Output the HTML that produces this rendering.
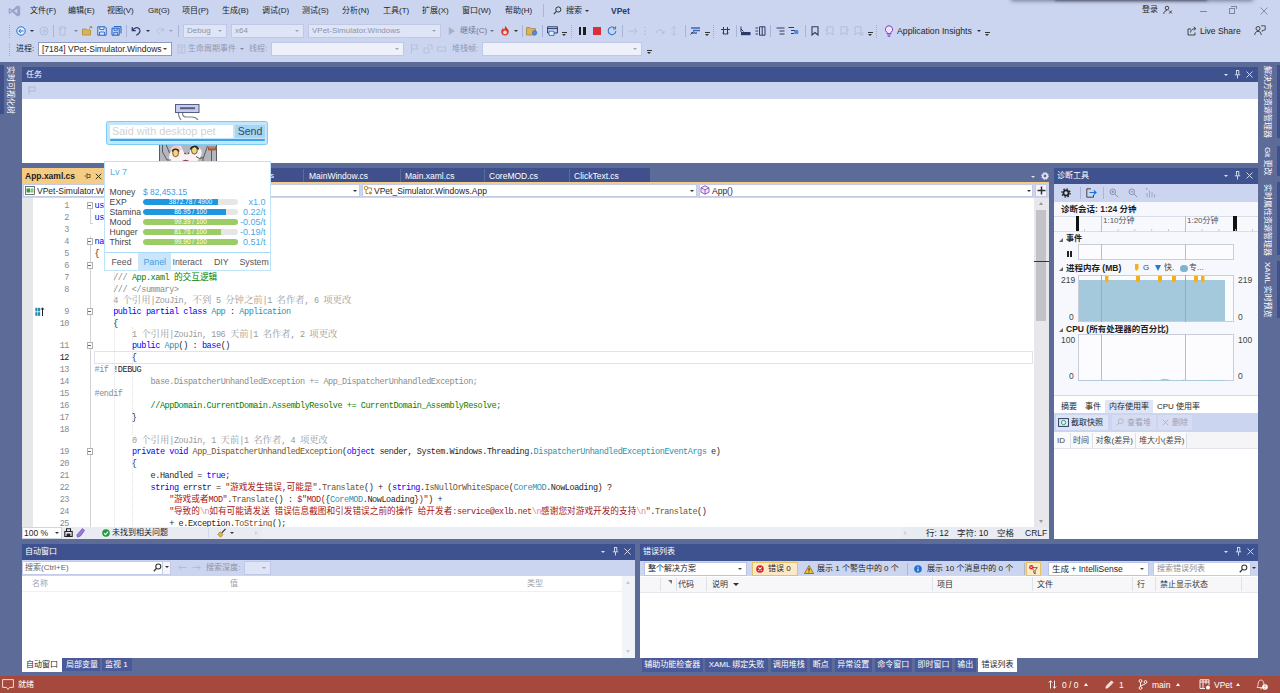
<!DOCTYPE html>
<html lang="zh-CN">
<head>
<meta charset="utf-8">
<title>VPet - Microsoft Visual Studio</title>
<style>
*{box-sizing:border-box;margin:0;padding:0}
html,body{width:1280px;height:693px;overflow:hidden}
body{position:relative;background:#5d6b99;font-family:"Liberation Sans","Noto Sans CJK SC",sans-serif;font-size:8px;color:#1e1e1e;line-height:1}
.a{position:absolute}
.t{position:absolute;white-space:nowrap;line-height:10px;height:10px}
.w{color:#fff}
.g{color:#8d93a8}
.mono{font-family:"Liberation Mono","Noto Sans CJK SC",monospace}
/* top chrome */
#chrome{left:0;top:0;width:1280px;height:62px;background:#ccd5f0}
.combo{position:absolute;background:#fff;border:1px solid #b9c3e2;height:14px}
.combo.dis{background:#dfe5f6;border-color:#bfc8e4}
.combo:after{content:"";position:absolute;right:4px;top:5px;border:2px solid transparent;border-top:2.5px solid #444;}
.combo.dis:after{border-top-color:#9aa3bd}
.combo .t{left:3px;top:1px}
.sep{position:absolute;width:1px;background:#aab4d6;height:12px}
.grip{position:absolute;width:0;height:13px;border-left:1.5px dotted #a3acd0}
.dd{position:absolute;width:0;height:0;border:2px solid transparent;border-top:2.5px solid #333}
.dd.w{border-top-color:#dfe4f5}
/* tool windows */
.ttl{position:absolute;background:#3f5290;color:#fff}
.tb{position:absolute;background:#ccd5f0}
.white{position:absolute;background:#fff}

/* editor */
.cl{position:absolute;left:72.5px;height:12px;line-height:12px;white-space:pre;font-family:"Liberation Mono","Noto Sans CJK SC",monospace;font-size:8.5px;letter-spacing:-0.43px;color:#1e1e1e}
.cl .c{font-size:8.67px;letter-spacing:0}
.cl.lens{color:#9a9a9a;height:10px;line-height:10px}
.cl.lens .lc{font-family:"Noto Serif CJK SC","Noto Sans CJK SC",serif;font-size:9.33px;letter-spacing:0}
.ln{position:absolute;left:19px;width:28px;text-align:right;height:12px;line-height:12px;font-family:"Liberation Mono",monospace;font-size:8.5px;letter-spacing:-0.43px;color:#858c96}
.ln.cur{color:#1e1e1e}
.k{color:#0000ff}.ty{color:#2b91af}.s{color:#a31515}.cm{color:#008000}.gr{color:#8c8c8c}.es{color:#e08a8a}.fn{color:#74531f}
.ob{position:absolute;width:6.5px;height:6.5px;border:1px solid #b0b0b0;background:#fff}
.ob:after{content:"";position:absolute;left:0.8px;top:1.8px;width:3px;height:1px;background:#666}

.tri{position:absolute;width:0;height:0;border-left:4px solid transparent;border-bottom:4px solid #666}
.mk{position:absolute;width:4px;height:7px;background:#f2b01e;clip-path:polygon(0 0,100% 0,100% 65%,50% 100%,0 65%)}

.pl{font-size:8.6px;color:#444}
.pv{font-size:9px;color:#4aa8e6}
.pm{font-size:8.8px;color:#555}
.rot{transform-origin:0 0;transform:rotate(90deg)}
</style>
</head>
<body>

<!-- ================= TOP CHROME ================= -->
<div id="chrome" class="a">
  <!-- VS logo -->
  <svg class="a" style="left:8px;top:5px" width="13" height="12" viewBox="0 0 13 12"><path d="M9.3 0.6 L12.2 1.8 V10.2 L9.3 11.4 L4.2 6.9 L1.7 8.9 L0.6 8.3 V3.7 L1.7 3.1 L4.2 5.1 Z M9.2 3.6 L6.2 6 L9.2 8.4 Z M1.8 4.7 V7.3 L3.2 6 Z" fill="#9aa3c9" fill-rule="evenodd"/></svg>
  <span class="t" style="left:30px;top:6px">文件(F)</span>
  <span class="t" style="left:68px;top:6px">编辑(E)</span>
  <span class="t" style="left:107px;top:6px">视图(V)</span>
  <span class="t" style="left:148px;top:6px">Git(G)</span>
  <span class="t" style="left:182px;top:6px">项目(P)</span>
  <span class="t" style="left:222px;top:6px">生成(B)</span>
  <span class="t" style="left:262px;top:6px">调试(D)</span>
  <span class="t" style="left:302px;top:6px">测试(S)</span>
  <span class="t" style="left:342px;top:6px">分析(N)</span>
  <span class="t" style="left:383px;top:6px">工具(T)</span>
  <span class="t" style="left:422px;top:6px">扩展(X)</span>
  <span class="t" style="left:462px;top:6px">窗口(W)</span>
  <span class="t" style="left:505px;top:6px">帮助(H)</span>
  <div class="sep" style="left:543px;top:4px;height:13px"></div>
  <svg class="a" style="left:553px;top:6px" width="9" height="9" viewBox="0 0 9 9"><circle cx="5.3" cy="3.5" r="2.6" fill="none" stroke="#333" stroke-width="1"/><path d="M3.4 5.4 L0.8 8.2" stroke="#333" stroke-width="1.1"/></svg>
  <span class="t" style="left:566px;top:6px">搜索</span>
  <div class="dd" style="left:585px;top:10px"></div>
  <span class="t" style="left:611px;top:6px;font-weight:bold;color:#2c3a6b;font-size:8.5px">VPet</span>

  <!-- window controls -->
  <span class="t" style="left:1142px;top:5px">登录</span>
  <svg class="a" style="left:1163px;top:5px" width="10" height="10" viewBox="0 0 10 10"><circle cx="4" cy="3" r="1.8" fill="none" stroke="#333" stroke-width="0.9"/><path d="M0.8 9 C0.8 6.4 2.4 5.6 4 5.6 M6 5.5 L9 8.5 M6.2 8.6 L8.8 5.6" fill="none" stroke="#333" stroke-width="0.9"/></svg>
  <div class="a" style="left:1200px;top:11px;width:7px;height:1px;background:#7d859f"></div>
  <div class="a" style="left:1229px;top:8px;width:6px;height:6px;border:1px solid #7d859f"></div>
  <div class="a" style="left:1231px;top:6px;width:6px;height:3px;border:1px solid #7d859f;border-bottom:0;border-left:0"></div>
  <svg class="a" style="left:1260px;top:7px" width="8" height="8" viewBox="0 0 8 8"><path d="M0.5 0.5 L7.5 7.5 M7.5 0.5 L0.5 7.5" stroke="#7d859f" stroke-width="0.9"/></svg>

  <div class="a" style="left:1012px;top:-8px;width:240px;height:8px;box-shadow:0 0 4px 1px rgba(40,45,70,.55)"></div><div class="a" style="left:1056px;top:-8px;width:150px;height:8px;box-shadow:0 0 3px 1px rgba(20,25,40,.5)"></div>
  <!-- toolbar row 1 -->
  <div class="grip" style="left:9px;top:25px"></div>
  <svg class="a" style="left:16px;top:26px" width="10" height="10" viewBox="0 0 10 10"><circle cx="5" cy="5" r="4.2" fill="#e8f0ff" stroke="#1f6fd0" stroke-width="1"/><path d="M7.5 5 H3 M4.8 3 L2.8 5 L4.8 7" fill="none" stroke="#1f6fd0" stroke-width="1"/></svg>
  <div class="dd" style="left:30px;top:30px"></div>
  <svg class="a" style="left:39px;top:26px" width="10" height="10" viewBox="0 0 10 10"><circle cx="5" cy="5" r="4" fill="none" stroke="#b3bcd9" stroke-width="1"/><path d="M2.5 5 H7 M5.2 3 L7.2 5 L5.2 7" fill="none" stroke="#b3bcd9" stroke-width="1"/></svg>
  <div class="sep" style="left:53px;top:25px"></div>
  <svg class="a" style="left:58px;top:26px" width="10" height="10" viewBox="0 0 10 10"><path d="M2 1 H7 V9 H2 Z M6 0.5 L8.5 3 M0.5 3 H4" fill="none" stroke="#b3bcd9" stroke-width="1"/></svg>
  <div class="dd" style="left:74px;top:30px;border-top-color:#7b84a3"></div>
  <svg class="a" style="left:82px;top:26px" width="11" height="10" viewBox="0 0 11 10"><path d="M0.5 9 V3 H4 L5 4 H8.5 V9 Z" fill="#dcb35a" stroke="#b08a2e" stroke-width="0.8"/><path d="M7 2.5 L9.8 0.6 M9.8 0.6 H7.8 M9.8 0.6 V2.4" stroke="#b08a2e" stroke-width="0.9" fill="none"/></svg>
  <svg class="a" style="left:97px;top:26px" width="10" height="10" viewBox="0 0 10 10"><path d="M0.8 0.8 H8 L9.2 2 V9.2 H0.8 Z" fill="#e6efff" stroke="#1f5fbf" stroke-width="1"/><path d="M2.8 1 V3.6 H7 V1 M2.6 9 V6 H7.4 V9" fill="none" stroke="#1f5fbf" stroke-width="0.9"/></svg>
  <svg class="a" style="left:111px;top:26px" width="11" height="10" viewBox="0 0 11 10"><path d="M1 2.2 H8.2 V9.2 H1 Z M2.8 0.6 H10 V7.4" fill="none" stroke="#1f5fbf" stroke-width="1"/><path d="M3 2.4 V4.4 H6.3 V2.4 M2.8 9 V6.4 H6.6 V9" fill="none" stroke="#1f5fbf" stroke-width="0.8"/></svg>
  <div class="sep" style="left:126px;top:25px"></div>
  <svg class="a" style="left:131px;top:26px" width="11" height="10" viewBox="0 0 11 10"><path d="M1.2 1 V4.6 H4.8 M1.6 4.4 C3 1.6 6.6 0.8 8.4 3 C10 5.2 8.4 7.8 5.2 9.2" fill="none" stroke="#2b3a67" stroke-width="1.2"/></svg>
  <div class="dd" style="left:146px;top:30px"></div>
  <svg class="a" style="left:155px;top:27px" width="10" height="8" viewBox="0 0 11 10"><path d="M9.8 1 V4.6 H6.2 M9.4 4.4 C8 1.6 4.4 0.8 2.6 3 C1 5.2 2.6 7.8 5.8 9.2" fill="none" stroke="#b3bcd9" stroke-width="1.1"/></svg>
  <div class="dd" style="left:169px;top:30px;border-top-color:#9aa3bd"></div>
  <div class="sep" style="left:178px;top:25px"></div>
  <div class="combo dis" style="left:183px;top:24px;width:44px"><span class="t g">Debug</span></div>
  <div class="combo dis" style="left:231px;top:24px;width:73px"><span class="t g">x64</span></div>
  <div class="combo dis" style="left:308px;top:24px;width:133px"><span class="t g">VPet-Simulator.Windows</span></div>
  <svg class="a" style="left:448px;top:26px" width="8" height="10" viewBox="0 0 8 10"><path d="M0.8 1 L7 5 L0.8 9 Z" fill="#a8b0c9"/></svg>
  <span class="t" style="left:460px;top:26px;color:#6b7390">继续(C)</span>
  <div class="dd" style="left:490px;top:30px;border-top-color:#6b7390"></div>
  <svg class="a" style="left:499.5px;top:25px" width="10" height="11" viewBox="0 0 10 11"><path d="M5 0.5 C5.6 2.4 8.8 3.6 8.8 6.8 C8.8 9.2 7 10.6 5 10.6 C3 10.6 1.2 9.2 1.2 6.8 C1.2 5 2.4 4.2 2.8 3 C3.6 3.8 3.8 4.4 3.8 5 C4.8 3.8 5.2 2.2 5 0.5 Z" fill="#d8352a"/><circle cx="5" cy="7.4" r="1.9" fill="#f7d9d4"/></svg>
  <div class="dd" style="left:513.5px;top:30px"></div>
  <div class="sep" style="left:521.5px;top:25px"></div>
  <svg class="a" style="left:526px;top:26px" width="12" height="10" viewBox="0 0 12 10"><path d="M0.5 9 V1.5 H4 L5 2.6 H9.5 V9 Z" fill="#dcb35a" stroke="#a98733" stroke-width="0.8"/><circle cx="8.6" cy="6.8" r="2.2" fill="#4e8de0" stroke="#2a63b5" stroke-width="0.6"/></svg>
  <div class="sep" style="left:542px;top:25px"></div>
  <svg class="a" style="left:546.5px;top:26px" width="11" height="10" viewBox="0 0 11 10"><path d="M0.6 0.8 H10.4 V7 H0.6 Z M0.6 2.6 H10.4" fill="none" stroke="#2b3a67" stroke-width="1"/><path d="M2 9.4 H7 V5.2 H2 Z" fill="#e8f0ff" stroke="#1f6fd0" stroke-width="0.9"/></svg>
  <div class="a" style="left:561.5px;top:32px;width:5px;height:1px;background:#333"></div><div class="dd" style="left:561.5px;top:34px;border-width:2px 2.5px 0 2.5px"></div>
  <div class="grip" style="left:570.5px;top:25px"></div>
  <div class="a" style="left:578.5px;top:27px;width:2.7px;height:8px;background:#1e1e1e"></div><div class="a" style="left:583.3px;top:27px;width:2.7px;height:8px;background:#1e1e1e"></div>
  <div class="a" style="left:593px;top:27px;width:7.5px;height:7.5px;background:#d7303a"></div>
  <svg class="a" style="left:606.5px;top:26px" width="10" height="10" viewBox="0 0 10 10"><path d="M7.6 2 A3.8 3.8 0 1 0 8.8 5" fill="none" stroke="#2f74cf" stroke-width="1.1"/><path d="M8.6 0.4 V3 H6" fill="none" stroke="#2f74cf" stroke-width="1"/></svg>
  <div class="sep" style="left:621.5px;top:25px"></div>
  <svg class="a" style="left:627.5px;top:27px" width="10" height="8" viewBox="0 0 10 8"><path d="M0.5 4 H9 M6 1 L9 4 L6 7" fill="none" stroke="#b3bcd9" stroke-width="1"/></svg>
  <svg class="a" style="left:643px;top:26px" width="4" height="10" viewBox="0 0 4 10"><circle cx="2" cy="1.5" r="0.8" fill="#b3bcd9"/><circle cx="2" cy="5" r="0.8" fill="#b3bcd9"/><circle cx="2" cy="8.500" r="0.8" fill="#b3bcd9"/></svg>
  <svg class="a" style="left:655px;top:27px" width="10" height="8" viewBox="0 0 10 8"><path d="M1 6.500 C1 2 8 1.500 8.500 6 M6.500 5 L8.600 6.600 L9.800 4.200" fill="none" stroke="#b3bcd9" stroke-width="1"/></svg>
  <svg class="a" style="left:671px;top:26px" width="6" height="10" viewBox="0 0 6 10"><path d="M3 0.500 V9.500 M1 2.500 L3 0.500 L5 2.500 M1 7.500 L3 9.500 L5 7.500" fill="none" stroke="#b3bcd9" stroke-width="0.9"/></svg>
  <div class="sep" style="left:685px;top:25px"></div>
  <svg class="a" style="left:690px;top:26px" width="11" height="10" viewBox="0 0 11 10"><path d="M1 2 H10 M3 4.500 H10 M1 7 H7" stroke="#3e66b4" stroke-width="1.300"/><path d="M0.500 8.500 L3.500 5.500" stroke="#2b3a67" stroke-width="1"/></svg>
  <div class="a" style="left:705px;top:32px;width:5px;height:1px;background:#333"></div><div class="dd" style="left:705px;top:34px;border-width:2px 2.500px 0 2.500px"></div>
  <div class="grip" style="left:713px;top:25px"></div>
  <svg class="a" style="left:720px;top:26px" width="11" height="10" viewBox="0 0 11 10"><path d="M1 3.500 H10 M3.500 1 V8.500 M7.500 1 V8.500 M2.500 7 Q5.500 9.500 8.500 7" fill="none" stroke="#2b3a67" stroke-width="1"/></svg>
  <div class="sep" style="left:736px;top:25px"></div>
  <svg class="a" style="left:740px;top:26px" width="11" height="10" viewBox="0 0 11 10"><path d="M1 0.500 V6 M1 3 L3.500 5.500" stroke="#2b3a67" stroke-width="1" fill="none"/><rect x="1" y="6" width="9.500" height="3.200" fill="#2b3a67"/></svg>
  <svg class="a" style="left:754.5px;top:26px" width="11" height="10" viewBox="0 0 11 10"><path d="M0.500 2 H3 M0.500 5 H3 M0.500 8 H3" stroke="#2b3a67" stroke-width="1"/><path d="M4.500 0.800 H10 V9.200 H4.500 Z M7.200 0.800 V9.200" fill="none" stroke="#2b3a67" stroke-width="1"/></svg>
  <div class="sep" style="left:770px;top:25px"></div>
  <svg class="a" style="left:775.5px;top:27px" width="9" height="8" viewBox="0 0 9 8"><path d="M0.500 1 H8.500 M3.500 4 H8.500 M3.500 7 H8.500" stroke="#2b3a67" stroke-width="1.100"/></svg>
  <svg class="a" style="left:788px;top:26px" width="11" height="10" viewBox="0 0 11 10"><path d="M0.500 1.500 H6 M3 4.500 H7 M3 7.500 H6" stroke="#2b3a67" stroke-width="1.100"/><circle cx="8.300" cy="6" r="2.300" fill="#4e8de0"/></svg>
  <div class="sep" style="left:804.5px;top:25px"></div>
  <svg class="a" style="left:810.5px;top:26px" width="8" height="10" viewBox="0 0 8 10"><path d="M1 0.800 H7 V9 L4 6.500 L1 9 Z" fill="none" stroke="#2b3a67" stroke-width="1.100"/></svg>
  <svg class="a" style="left:824.5px;top:26px" width="9" height="10" viewBox="0 0 9 10"><path d="M2 0.800 H8 V9 L5 6.500 L2 9 Z M0 4 H3" fill="none" stroke="#b3bcd9" stroke-width="1"/></svg>
  <svg class="a" style="left:839.5px;top:26px" width="9" height="10" viewBox="0 0 9 10"><path d="M1 0.800 H7 V9 L4 6.500 L1 9 Z M6 4 H9" fill="none" stroke="#b3bcd9" stroke-width="1"/></svg>
  <svg class="a" style="left:854px;top:26px" width="10" height="10" viewBox="0 0 10 10"><path d="M1 0.800 H7 V9 L4 6.500 L1 9 Z M6 6 L9.500 9.500 M9.500 6 L6 9.500" fill="none" stroke="#b3bcd9" stroke-width="1"/></svg>
  <div class="a" style="left:868px;top:32px;width:5px;height:1px;background:#333"></div><div class="dd" style="left:868px;top:34px;border-width:2px 2.500px 0 2.500px"></div>
  <div class="grip" style="left:876px;top:25px"></div>
  <svg class="a" style="left:884px;top:25px" width="10" height="12" viewBox="0 0 10 12"><path d="M5 0.800 A3.600 3.600 0 0 1 7 7.400 V8.600 H3 V7.400 A3.600 3.600 0 0 1 5 0.800 Z" fill="#efe3fb" stroke="#7b3fc4" stroke-width="1"/><path d="M3.300 10 H6.700 M3.800 11.300 H6.200" stroke="#7b3fc4" stroke-width="0.900"/></svg>
  <span class="t" style="left:897px;top:26px;font-size:8.700px">Application Insights</span>
  <div class="dd" style="left:977px;top:30px"></div>
  <div class="a" style="left:985px;top:32px;width:5px;height:1px;background:#333"></div><div class="dd" style="left:985px;top:34px;border-width:2px 2.500px 0 2.500px"></div>
  <svg class="a" style="left:1187px;top:26px" width="10" height="10" viewBox="0 0 10 10"><path d="M4 3 H1 V9 H8 V6.500" fill="none" stroke="#333" stroke-width="0.900"/><path d="M3.500 6.500 C3.500 4 5.500 2.600 8.600 2.600 M6.800 0.800 L8.800 2.600 L6.800 4.400" fill="none" stroke="#333" stroke-width="0.900"/></svg>
  <span class="t" style="left:1200px;top:26px;font-size:8.500px">Live Share</span>
  <svg class="a" style="left:1254px;top:25px" width="12" height="11" viewBox="0 0 12 11"><circle cx="4" cy="3.500" r="2" fill="none" stroke="#333" stroke-width="0.900"/><path d="M0.800 10 C0.800 7.200 2.400 6.400 4 6.400 C5.600 6.400 7.200 7.200 7.200 10" fill="none" stroke="#333" stroke-width="0.900"/><path d="M7 0.800 H11.200 V5 H9.500 L8.300 6.400 V5" fill="none" stroke="#333" stroke-width="0.800"/></svg>

  <!-- toolbar row 2 -->
  <div class="grip" style="left:9px;top:43px"></div>
  <span class="t" style="left:16px;top:44px">进程:</span>
  <div class="combo" style="left:38px;top:42px;width:134px;border-color:#8e9bc4"><span class="t" style="font-size:8.500px">[7184] VPet-Simulator.Windows</span></div>
  <svg class="a" style="left:177px;top:44px" width="9" height="10" viewBox="0 0 9 10"><path d="M1 1 H8 V9 H1 Z M1 3 H8 M3 5 H6 M3 7 H6" fill="none" stroke="#b3bcd9" stroke-width="0.900"/></svg>
  <span class="t" style="left:188px;top:44px;color:#9097b2">生命周期事件</span>
  <div class="dd" style="left:240px;top:48px;border-top-color:#7b84a3"></div>
  <span class="t" style="left:249px;top:44px;color:#9097b2">线程:</span>
  <div class="combo dis" style="left:271px;top:42px;width:133px;background:#eef1fa"></div>
  <svg class="a" style="left:410px;top:44px" width="9" height="10" viewBox="0 0 9 10"><path d="M1.500 0.500 V9.500 M1.500 1 H8 L6.500 3 L8 5 H1.500" fill="none" stroke="#b3bcd9" stroke-width="0.900"/></svg>
  <svg class="a" style="left:423px;top:44px" width="10" height="10" viewBox="0 0 10 10"><path d="M1 4 H6 V9 H1 Z M4 1 H9 V6" fill="none" stroke="#b3bcd9" stroke-width="0.900"/></svg>
  <svg class="a" style="left:437px;top:46px" width="9" height="6" viewBox="0 0 9 6"><path d="M0.500 1 H8.500 V5 H0.500 Z" fill="none" stroke="#b3bcd9" stroke-width="0.900"/></svg>
  <span class="t" style="left:452px;top:44px;color:#9097b2">堆栈帧:</span>
  <div class="combo dis" style="left:482px;top:42px;width:160px;background:#eef1fa"></div>
  <div class="a" style="left:646.5px;top:50px;width:5px;height:1px;background:#333"></div><div class="dd" style="left:646.5px;top:52px;border-width:2px 2.500px 0 2.500px"></div>
</div>

<!-- ================= SIDE STRIPS ================= -->
<div class="a" style="left:0;top:65px;width:4px;height:49px;background:#40508d"></div>
<div class="t w rot" style="left:15px;top:65.5px">实时可视化树</div>
<div class="a" style="left:1276.5px;top:65px;width:4px;height:73px;background:#40508d"></div>
<div class="a" style="left:1276.5px;top:146px;width:4px;height:30px;background:#40508d"></div>
<div class="a" style="left:1276.5px;top:182px;width:4px;height:73px;background:#40508d"></div>
<div class="a" style="left:1276.5px;top:261px;width:4px;height:57px;background:#40508d"></div>
<div class="t w rot" style="left:1271.8px;top:66px">解决方案资源管理器</div>
<div class="t w rot" style="left:1271.8px;top:147px">Git 更改</div>
<div class="t w rot" style="left:1271.8px;top:183.5px">实时属性资源管理器</div>
<div class="t w rot" style="left:1271.8px;top:262px">XAML 实时预览</div>

<!-- ================= TASK PANEL ================= -->
<div class="ttl" style="left:22px;top:67px;width:1236px;height:15px"><span class="t w" style="left:4px;top:3px">任务</span>
  <div class="dd w" style="left:1202px;top:7px"></div>
  <svg class="a" style="left:1212px;top:3px" width="7" height="9" viewBox="0 0 7 9"><path d="M2 0.500 H5 M2.500 0.500 V4.500 M4.800 0.500 V4.500 M0.800 4.800 H6.200 M3.500 5 V8.500" stroke="#dfe4f5" stroke-width="0.900" fill="none"/></svg>
  <svg class="a" style="left:1224px;top:4px" width="7" height="7" viewBox="0 0 7 7"><path d="M0.500 0.500 L6.500 6.500 M6.500 0.500 L0.500 6.500" stroke="#dfe4f5" stroke-width="0.900"/></svg>
</div>
<div class="tb" style="left:22px;top:82px;width:1236px;height:17px">
  <svg class="a" style="left:6px;top:4px" width="8" height="9" viewBox="0 0 8 9"><path d="M1 0.500 V8.500 M1 1 H7 V5 H1" fill="none" stroke="#a9b2d0" stroke-width="0.900"/></svg>
</div>
<div class="white" style="left:22px;top:99px;width:1236px;height:64px"></div>

<!-- ================= EDITOR TABS ================= -->
<div class="a" style="left:22px;top:168px;width:628px;height:15px;background:#40508d"></div>
<div class="a" style="left:22px;top:182px;width:1027px;height:1.5px;background:#f5cc84"></div>
<div class="a" style="left:22px;top:168px;width:83px;height:16px;background:#f5cc84">
  <span class="t" style="left:3px;top:3px;font-weight:bold;font-size:8.500px;color:#1e1e1e">App.xaml.cs</span>
  <svg class="a" style="left:62px;top:4px" width="7" height="8" viewBox="0 0 7 8"><path d="M0.500 4 H3 M3 1 V7 M3 2.500 H6 M3 5.500 H6 M6 2 V6" fill="none" stroke="#5a4a22" stroke-width="0.800"/></svg>
  <svg class="a" style="left:73px;top:5px" width="7" height="7" viewBox="0 0 7 7"><path d="M0.800 0.800 L6.200 6.200 M6.200 0.800 L0.800 6.200" stroke="#3a3014" stroke-width="1"/></svg>
</div>
<span class="t w" style="left:270px;top:171px">s</span>
<div class="a" style="left:303px;top:169px;width:1px;height:13px;background:#5d6b99"></div>
<span class="t w" style="left:309px;top:171px;font-size:8.500px">MainWindow.cs</span>
<div class="a" style="left:400px;top:169px;width:1px;height:13px;background:#5d6b99"></div>
<span class="t w" style="left:405px;top:171px;font-size:8.500px">Main.xaml.cs</span>
<div class="a" style="left:484px;top:169px;width:1px;height:13px;background:#5d6b99"></div>
<span class="t w" style="left:489px;top:171px;font-size:8.500px">CoreMOD.cs</span>
<div class="a" style="left:569px;top:169px;width:1px;height:13px;background:#5d6b99"></div>
<span class="t w" style="left:574px;top:171px;font-size:8.500px">ClickText.cs</span>
<div class="dd w" style="left:1031px;top:176px"></div>
<svg class="a" style="left:1041px;top:172px" width="8" height="8" viewBox="0 0 8 8"><circle cx="4" cy="4" r="2.300" fill="none" stroke="#dfe4f5" stroke-width="1.800"/><circle cx="4" cy="4" r="3.400" fill="none" stroke="#dfe4f5" stroke-width="1" stroke-dasharray="1.300 1.370"/></svg>

<!-- ================= NAV BAR ================= -->
<div class="a" style="left:22px;top:183.5px;width:1027px;height:14.5px;background:#ccd5f0"></div>
<div class="a" style="left:23px;top:184px;width:337px;height:13px;background:#fff;border:1px solid #c3cbe6"></div>
<div class="a" style="left:362px;top:184px;width:335px;height:13px;background:#fff;border:1px solid #c3cbe6"></div>
<div class="a" style="left:699px;top:184px;width:334px;height:13px;background:#fff;border:1px solid #c3cbe6"></div>
<div class="a" style="left:1035px;top:184px;width:12px;height:13px;background:#f4f6fc;border:1px solid #c3cbe6"></div>
<svg class="a" style="left:1037px;top:186px" width="9" height="9" viewBox="0 0 9 9"><path d="M4.500 0.500 V8.500 M0.500 4.500 H8.500" stroke="#333" stroke-width="1.500"/></svg>
<svg class="a" style="left:25px;top:186px" width="10" height="9" viewBox="0 0 10 9"><rect x="0.500" y="0.500" width="9" height="8" fill="#fff" stroke="#555" stroke-width="0.800"/><rect x="1.500" y="2.500" width="3.500" height="4" fill="#3a9a3a"/><rect x="5.500" y="2.500" width="3" height="4" fill="#7fc67f"/></svg>
<span class="t" style="left:37px;top:186px;font-size:8.500px">VPet-Simulator.W</span>
<div class="dd" style="left:353px;top:190px"></div>
<svg class="a" style="left:363px;top:185px" width="10" height="10" viewBox="0 0 10 10"><circle cx="3" cy="3" r="1.800" fill="none" stroke="#c28a1e" stroke-width="1"/><path d="M4.500 3 H8.500 M8.500 3 V5.500 M3 5 V8.500 H5.500" fill="none" stroke="#c28a1e" stroke-width="1"/><circle cx="7.500" cy="8" r="1.400" fill="#c28a1e"/></svg>
<span class="t" style="left:374px;top:186px;font-size:8.500px">VPet_Simulator.Windows.App</span>
<div class="dd" style="left:690px;top:190px"></div>
<svg class="a" style="left:700px;top:185px" width="10" height="10" viewBox="0 0 10 10"><path d="M5 0.800 L9 2.800 V7.200 L5 9.200 L1 7.200 V2.800 Z M1 2.800 L5 4.800 L9 2.800 M5 4.800 V9.200" fill="#f2e6fb" stroke="#8a4fc8" stroke-width="0.900"/></svg>
<span class="t" style="left:712px;top:186px;font-size:8.500px">App()</span>
<div class="dd" style="left:1027px;top:190px"></div>

<!-- ================= EDITOR ================= -->
<div id="ed" class="a" style="left:22px;top:198px;width:1027px;height:329px;background:#fff;overflow:hidden">
<div class="a" style="left:0;top:0;width:11px;height:329px;background:#e6e7e8"></div>
<div class="a" style="left:91.5px;top:61px;width:0;height:268px;border-left:1px dotted #e4e4e4"></div>
<div class="a" style="left:110.2px;top:129px;width:0;height:108px;border-left:1px dotted #e4e4e4"></div>
<div class="a" style="left:110.2px;top:259px;width:0;height:70px;border-left:1px dotted #e4e4e4"></div>
<div class="a" style="left:67.5px;top:7px;width:1px;height:322px;background:#d2d2d2"></div>
<div class="a" style="left:67.5px;top:26px;width:1px;height:12px;background:#fff"></div>
<div class="a" style="left:67.5px;top:25px;width:3px;height:1px;background:#d2d2d2"></div>
<div class="ob" style="left:64.5px;top:4px"></div>
<div class="ob" style="left:64.5px;top:40px"></div>
<div class="ob" style="left:64.5px;top:64px"></div>
<div class="ob" style="left:64.5px;top:110px"></div>
<div class="ob" style="left:64.5px;top:144px"></div>
<div class="ob" style="left:64.5px;top:250px"></div>
<div class="a" style="left:72px;top:153px;width:939px;height:13px;border:1px solid #dfe3ee"></div>
<svg class="a" style="left:13px;top:109px" width="10" height="10" viewBox="0 0 10 10"><rect x="0.300" y="0.800" width="2.200" height="3.600" fill="#2a8ab0"/><rect x="3" y="0.800" width="2.200" height="3.600" fill="#2a8ab0"/><rect x="0.300" y="5.200" width="2.200" height="3.600" fill="#2a8ab0"/><rect x="3" y="5.200" width="2.200" height="3.600" fill="#2a8ab0"/><path d="M7.500 9 V1 M6.200 2.600 L7.500 0.800 L8.800 2.600" stroke="#222" stroke-width="1" fill="none"/></svg>
<div class="ln" style="top:2px">1</div>
<div class="cl" style="top:2px"><span class="k">using</span> System;</div>
<div class="ln" style="top:14px">2</div>
<div class="cl" style="top:14px"><span class="k">using</span> System.Windows;</div>
<div class="ln" style="top:26px">3</div>
<div class="ln" style="top:38px">4</div>
<div class="cl" style="top:38px"><span class="k">namespace</span> VPet_Simulator.Windows</div>
<div class="ln" style="top:50px">5</div>
<div class="cl" style="top:50px">{</div>
<div class="ln" style="top:62px">6</div>
<div class="cl" style="top:62px">    <span class="gr">/// &lt;summary&gt;</span></div>
<div class="ln" style="top:74px">7</div>
<div class="cl" style="top:74px">    <span class="gr">/// </span><span class="cm">App.xaml <span class="c">的交互逻辑</span></span></div>
<div class="ln" style="top:86px">8</div>
<div class="cl" style="top:86px">    <span class="gr">/// &lt;/summary&gt;</span></div>
<div class="ln" style="top:108px">9</div>
<div class="cl" style="top:108px">    <span class="k">public partial class</span> <span class="ty">App</span> : <span class="ty">Application</span></div>
<div class="ln" style="top:120px">10</div>
<div class="cl" style="top:120px">    {</div>
<div class="ln" style="top:142px">11</div>
<div class="cl" style="top:142px">        <span class="k">public</span> <span class="ty">App</span>() : <span class="k">base</span>()</div>
<div class="ln cur" style="top:154px">12</div>
<div class="cl" style="top:154px">        {</div>
<div class="ln" style="top:166px">13</div>
<div class="cl" style="top:166px"><span class="gr">#if</span> !DEBUG</div>
<div class="ln" style="top:178px">14</div>
<div class="cl" style="top:178px">            <span class="gr">base.DispatcherUnhandledException += App_DispatcherUnhandledException;</span></div>
<div class="ln" style="top:190px">15</div>
<div class="cl" style="top:190px"><span class="gr">#endif</span></div>
<div class="ln" style="top:202px">16</div>
<div class="cl" style="top:202px">            <span class="cm">//AppDomain.CurrentDomain.AssemblyResolve += CurrentDomain_AssemblyResolve;</span></div>
<div class="ln" style="top:214px">17</div>
<div class="cl" style="top:214px">        }</div>
<div class="ln" style="top:226px">18</div>
<div class="ln" style="top:248px">19</div>
<div class="cl" style="top:248px">        <span class="k">private void</span> <span class="fn">App_DispatcherUnhandledException</span>(<span class="k">object</span> sender, System.Windows.Threading.<span class="ty">DispatcherUnhandledExceptionEventArgs</span> e)</div>
<div class="ln" style="top:260px">20</div>
<div class="cl" style="top:260px">        {</div>
<div class="ln" style="top:272px">21</div>
<div class="cl" style="top:272px">            e.Handled = <span class="k">true</span>;</div>
<div class="ln" style="top:284px">22</div>
<div class="cl" style="top:284px">            <span class="k">string</span> errstr = <span class="s">"<span class="c">游戏发生错误</span>,<span class="c">可能是</span>"</span>.<span class="fn">Translate</span>() + (<span class="k">string</span>.<span class="fn">IsNullOrWhiteSpace</span>(<span class="ty">CoreMOD</span>.NowLoading) ?</div>
<div class="ln" style="top:296px">23</div>
<div class="cl" style="top:296px">                <span class="s">"<span class="c">游戏或者</span>MOD"</span>.<span class="fn">Translate</span>() : <span class="s">$"MOD(</span>{<span class="ty">CoreMOD</span>.NowLoading}<span class="s">)"</span>) +</div>
<div class="ln" style="top:308px">24</div>
<div class="cl" style="top:308px">                <span class="s">"<span class="c">导致的</span></span><span class="es">\n</span><span class="s"><span class="c">如有可能请发送</span> <span class="c">错误信息截图和引发错误之前的操作</span> <span class="c">给开发者</span>:service@exlb.net</span><span class="es">\n</span><span class="s"><span class="c">感谢您对游戏开发的支持</span></span><span class="es">\n</span><span class="s">"</span>.<span class="fn">Translate</span>()</div>
<div class="ln" style="top:320px">25</div>
<div class="cl" style="top:320px">                + e.Exception.<span class="fn">ToString</span>();</div>
<div class="cl lens" style="top:96px;left:91.2px">4 <span class="lc">个</span><span class="lc">引</span><span class="lc">用</span>|ZouJin, <span class="lc">不</span><span class="lc">到</span> 5 <span class="lc">分</span><span class="lc">钟</span><span class="lc">之</span><span class="lc">前</span>|1 <span class="lc">名</span><span class="lc">作</span><span class="lc">者</span>, 6 <span class="lc">项</span><span class="lc">更</span><span class="lc">改</span></div>
<div class="cl lens" style="top:130px;left:109.9px">1 <span class="lc">个</span><span class="lc">引</span><span class="lc">用</span>|ZouJin, 196 <span class="lc">天</span><span class="lc">前</span>|1 <span class="lc">名</span><span class="lc">作</span><span class="lc">者</span>, 2 <span class="lc">项</span><span class="lc">更</span><span class="lc">改</span></div>
<div class="cl lens" style="top:236px;left:109.9px">0 <span class="lc">个</span><span class="lc">引</span><span class="lc">用</span>|ZouJin, 1 <span class="lc">天</span><span class="lc">前</span>|1 <span class="lc">名</span><span class="lc">作</span><span class="lc">者</span>, 4 <span class="lc">项</span><span class="lc">更</span><span class="lc">改</span></div>
<div class="a" style="left:1012px;top:0;width:15px;height:329px;background:#e8e8ec"></div>
<div class="a" style="left:1014px;top:12px;width:10px;height:111px;background:#c2c3c9"></div>
<div class="a" style="left:1012px;top:63px;width:15px;height:1px;background:#2222c8"></div>
<div class="a" style="left:1016.5px;top:4px;width:0;height:0;border:2.5px solid transparent;border-bottom:3px solid #999;border-top:0"></div>
<div class="a" style="left:1016.5px;top:322px;width:0;height:0;border:2.5px solid transparent;border-top:3px solid #999;border-bottom:0"></div>
</div>

<!-- editor bottom bar -->
<div class="a" style="left:22px;top:527px;width:1027px;height:12px;background:#e9ebf2">
  <div class="a" style="left:0;top:0;width:40px;height:12px;background:#fff;border:1px solid #d0d5e6"></div>
  <span class="t" style="left:2px;top:1px;font-size:8.5px">100 %</span>
  <div class="dd" style="left:33px;top:5px"></div>
  <svg class="a" style="left:42px;top:1px" width="9" height="10" viewBox="0 0 9 10"><path d="M2.500 0.800 H6.500 V3.500 H2.500 Z M0.800 3.500 H8.200 V8.500 H0.800 Z" fill="none" stroke="#222" stroke-width="1.100"/><rect x="2.600" y="5.600" width="3.800" height="2.600" fill="#222"/></svg>
  <svg class="a" style="left:54px;top:1px" width="9" height="10" viewBox="0 0 9 10"><path d="M6.500 0.500 L8.500 2.500 L4.500 8 L1.500 9.200 L0.800 7 Z" fill="#9a7ad6" stroke="#6a48b5" stroke-width="0.700"/></svg>
  <svg class="a" style="left:80px;top:2px" width="8" height="8" viewBox="0 0 8 8"><circle cx="4" cy="4" r="3.800" fill="#1f9a3c"/><path d="M2 4.100 L3.500 5.600 L6.100 2.700" stroke="#fff" stroke-width="1.100" fill="none"/></svg>
  <span class="t" style="left:90px;top:1px">未找到相关问题</span>
  <div class="a" style="left:186px;top:1px;width:1px;height:10px;background:#d5d9e6"></div>
  <svg class="a" style="left:195px;top:1px" width="10" height="10" viewBox="0 0 10 10"><path d="M8.500 0.800 L4.800 4.800" stroke="#333" stroke-width="1.200"/><path d="M3.200 3.800 L6 6.600 L3.500 9.200 L0.800 6.400 Z" fill="#e0b84a" stroke="#8a6d1c" stroke-width="0.600"/></svg>
  <div class="dd" style="left:208px;top:5px"></div>
  <div class="a" style="left:233px;top:3.500px;width:0;height:0;border:2.500px solid transparent;border-left:3px solid #cfd3de;border-right:0"></div>
  <div class="a" style="left:240px;top:0;width:640px;height:12px;background:#eceef4"></div>
  <div class="a" style="left:882px;top:3.500px;width:0;height:0;border:2.500px solid transparent;border-left:3px solid #cfd3de;border-right:0"></div>
  <span class="t" style="left:904px;top:1px;font-size:8.500px">行: 12</span>
  <span class="t" style="left:935px;top:1px;font-size:8.500px">字符: 10</span>
  <span class="t" style="left:975px;top:1px;font-size:8.500px">空格</span>
  <span class="t" style="left:1003px;top:1px;font-size:8.500px">CRLF</span>
</div>

<!-- ================= DIAGNOSTIC TOOLS ================= -->
<div class="a" style="left:1054px;top:168px;width:204px;height:371px;background:#f6f8fd"></div>
<div class="ttl" style="left:1054px;top:168px;width:204px;height:16px"><span class="t w" style="left:3px;top:3px">诊断工具</span>
  <div class="dd w" style="left:170px;top:7px"></div>
  <svg class="a" style="left:180px;top:3px" width="7" height="9" viewBox="0 0 7 9"><path d="M2 0.500 H5 M2.500 0.500 V4.500 M4.800 0.500 V4.500 M0.800 4.800 H6.200 M3.500 5 V8.500" stroke="#dfe4f5" stroke-width="0.900" fill="none"/></svg>
  <svg class="a" style="left:192px;top:4px" width="7" height="7" viewBox="0 0 7 7"><path d="M0.500 0.500 L6.500 6.500 M6.500 0.500 L0.500 6.500" stroke="#dfe4f5" stroke-width="0.900"/></svg>
</div>
<div class="tb" style="left:1054px;top:184px;width:204px;height:18px">
  <svg class="a" style="left:7px;top:4px" width="10" height="10" viewBox="0 0 10 10"><circle cx="5" cy="5" r="2.600" fill="none" stroke="#222" stroke-width="1.800"/><circle cx="5" cy="5" r="4.100" fill="none" stroke="#222" stroke-width="1.300" stroke-dasharray="1.500 1.720"/></svg>
  <div class="sep" style="left:26px;top:3px"></div>
  <svg class="a" style="left:32px;top:4px" width="11" height="10" viewBox="0 0 11 10"><path d="M5 0.800 H0.800 V9.200 H7.500 V7" fill="none" stroke="#333" stroke-width="0.900"/><path d="M3.500 4.500 H10 M7.800 2.300 L10 4.500 L7.800 6.700" fill="none" stroke="#1f6fd0" stroke-width="1.200"/></svg>
  <div class="sep" style="left:49px;top:3px"></div>
  <svg class="a" style="left:55px;top:4px" width="10" height="10" viewBox="0 0 10 10"><circle cx="3.800" cy="3.800" r="2.800" fill="none" stroke="#8089a8" stroke-width="0.900"/><path d="M6 6 L9.200 9.200 M2.500 3.800 H5.100 M3.800 2.500 V5.100" stroke="#8089a8" stroke-width="0.900"/></svg>
  <svg class="a" style="left:74px;top:4px" width="10" height="10" viewBox="0 0 10 10"><circle cx="3.800" cy="3.800" r="2.800" fill="none" stroke="#8089a8" stroke-width="0.900"/><path d="M6 6 L9.200 9.200 M2.500 3.800 H5.100" stroke="#8089a8" stroke-width="0.900"/></svg>
  <svg class="a" style="left:92px;top:4px" width="10" height="10" viewBox="0 0 10 10"><path d="M1 9.500 V5 M3.500 9.500 V2.500 M6 9.500 V4 M8.500 9.500 V6 M0.500 0.500 V2 M0.500 0.500 H2" stroke="#a0a8c4" stroke-width="1" fill="none"/></svg>
</div>
<span class="t" style="left:1061px;top:204px;font-weight:bold;font-size:8.500px">诊断会话: 1:24 分钟</span>
<!-- ruler -->
<div class="a" style="left:1054px;top:216px;width:204px;height:16px;border-top:1px solid #d9ddea;border-bottom:1px solid #d9ddea;background:#f8f9fd"></div>
<div class="a" style="left:1075.500px;top:216px;width:3.500px;height:15px;background:#111"></div>
<div class="a" style="left:1233px;top:216px;width:3.500px;height:15px;background:#111"></div>
<div class="a" style="left:1101px;top:216px;width:1px;height:16px;background:#b9bdc9"></div>
<div class="a" style="left:1185px;top:216px;width:1px;height:16px;background:#b9bdc9"></div>
<span class="t" style="left:1103px;top:216px;color:#555;font-size:8px">1:10分钟</span>
<span class="t" style="left:1187px;top:216px;color:#555;font-size:8px">1:20分钟</span>
<div class="a" style="left:1084px;top:229px;width:170px;height:2px;background-image:linear-gradient(90deg,#c5c9d6 1px,transparent 1px);background-size:16.800px 2px"></div>
<!-- events -->
<div class="tri" style="left:1059px;top:238px"></div>
<span class="t" style="left:1066px;top:234px;font-weight:bold">事件</span>
<div class="a" style="left:1078px;top:244px;width:156px;height:16px;border:1px solid #c9cdd9;background:#fcfcfe"></div>
<div class="a" style="left:1101px;top:244px;width:1px;height:16px;background:#b9bdc9"></div>
<div class="a" style="left:1185px;top:244px;width:1px;height:16px;background:#b9bdc9"></div>
<div class="a" style="left:1066.500px;top:250.500px;width:2px;height:6px;background:#222"></div><div class="a" style="left:1070px;top:250.500px;width:2px;height:6px;background:#222"></div>
<!-- memory -->
<div class="tri" style="left:1059px;top:267px"></div>
<span class="t" style="left:1066px;top:263px;font-weight:bold;font-size:8.500px">进程内存 (MB)</span>
<div class="mk" style="left:1134.500px;top:264px"></div>
<span class="t" style="left:1143px;top:263px;color:#444">G</span>
<div class="a" style="left:1155px;top:265px;width:0;height:0;border-left:3.700px solid transparent;border-right:3.700px solid transparent;border-top:6px solid #1f7ad0"></div>
<span class="t" style="left:1164px;top:263px;color:#444">快.</span>
<div class="a" style="left:1180px;top:264.500px;width:7.500px;height:7.500px;border-radius:50%;background:#7fb3cf"></div>
<span class="t" style="left:1189px;top:263px;color:#444">专...</span>
<div class="a" style="left:1078px;top:275px;width:156px;height:47px;border:1px solid #c9cdd9;background:#fcfcfe"></div>
<div class="a" style="left:1079px;top:280px;width:146px;height:41px;background:#a5c9dc"></div>
<div class="a" style="left:1101px;top:275px;width:1px;height:47px;background:#8fb0c2"></div>
<div class="a" style="left:1185px;top:275px;width:1px;height:47px;background:#8fb0c2"></div>
<div class="mk" style="left:1104.500px;top:276px"></div><div class="mk" style="left:1136px;top:276px"></div><div class="mk" style="left:1158px;top:276px"></div><div class="mk" style="left:1172px;top:276px"></div><div class="mk" style="left:1194px;top:276px"></div><div class="mk" style="left:1200.500px;top:276px"></div>
<span class="t" style="left:1061px;top:275px;color:#444;font-size:8.500px">219</span>
<span class="t" style="left:1238px;top:275px;color:#444;font-size:8.500px">219</span>
<span class="t" style="left:1069px;top:312px;color:#444;font-size:8.500px">0</span>
<span class="t" style="left:1238px;top:312px;color:#444;font-size:8.500px">0</span>
<!-- cpu -->
<div class="tri" style="left:1059px;top:328px"></div>
<span class="t" style="left:1066px;top:323.500px;font-weight:bold;font-size:8.500px">CPU (所有处理器的百分比)</span>
<div class="a" style="left:1078px;top:334px;width:156px;height:47px;border:1px solid #c9cdd9;background:#fcfcfe"></div>
<div class="a" style="left:1101px;top:334px;width:1px;height:47px;background:#b9bdc9"></div>
<div class="a" style="left:1185px;top:334px;width:1px;height:47px;background:#b9bdc9"></div>
<svg class="a" style="left:1079px;top:376px" width="154" height="5" viewBox="0 0 154 5"><path d="M0 5 V4.500 H20 L24 4 L30 4.500 H60 L64 4 H70 L80 4.200 L84 2.800 L88 3 L92 4.300 H100 L104 3.800 L112 4.300 H120 L126 4 H146 V5 Z" fill="#a5c9dc"/></svg>
<span class="t" style="left:1061px;top:335px;color:#444;font-size:8.500px">100</span>
<span class="t" style="left:1238px;top:335px;color:#444;font-size:8.500px">100</span>
<span class="t" style="left:1069px;top:371px;color:#444;font-size:8.500px">0</span>
<span class="t" style="left:1238px;top:371px;color:#444;font-size:8.500px">0</span>
<!-- lower tabs -->
<div class="a" style="left:1054px;top:395px;width:204px;height:1px;background:#d5d9e6"></div>
<div class="a" style="left:1054px;top:396px;width:204px;height:143px;background:#fff"></div>
<div class="a" style="left:1105px;top:400px;width:48px;height:13px;background:#dfe5f6"></div>
<span class="t" style="left:1061px;top:402px">摘要</span>
<span class="t" style="left:1085px;top:402px">事件</span>
<span class="t" style="left:1109px;top:402px">内存使用率</span>
<span class="t" style="left:1157px;top:402px">CPU 使用率</span>
<div class="tb" style="left:1054px;top:413px;width:204px;height:19px"></div>
<div class="a" style="left:1056px;top:415px;width:52px;height:15px;background:#dde4f7"></div>
<svg class="a" style="left:1058px;top:418px" width="11" height="9" viewBox="0 0 11 9"><rect x="0.600" y="0.600" width="9.800" height="7.800" fill="#e8f3ee" stroke="#2b3a67" stroke-width="1"/><circle cx="5.500" cy="4.500" r="2.200" fill="none" stroke="#2f8a6a" stroke-width="0.900"/></svg>
<span class="t" style="left:1071px;top:417.500px">截取快照</span>
<div class="a" style="left:1112px;top:415px;width:44px;height:15px;background:#d6ddf3"></div>
<svg class="a" style="left:1116px;top:418px" width="8" height="8" viewBox="0 0 8 8"><circle cx="4.800" cy="3.200" r="2.400" fill="none" stroke="#aab2cc" stroke-width="0.900"/><path d="M3 5 L0.800 7.200" stroke="#aab2cc" stroke-width="0.900"/></svg>
<span class="t" style="left:1127px;top:417.500px;color:#9aa2bd">查看堆</span>
<div class="a" style="left:1158px;top:415px;width:34px;height:15px;background:#d6ddf3"></div>
<svg class="a" style="left:1162px;top:419px" width="7" height="7" viewBox="0 0 7 7"><path d="M0.800 0.800 L6.200 6.200 M6.200 0.800 L0.800 6.200" stroke="#aab2cc" stroke-width="0.900"/></svg>
<span class="t" style="left:1172px;top:417.500px;color:#9aa2bd">删除</span>
<div class="a" style="left:1054px;top:432px;width:204px;height:17px;background:#f5f5f7;border-bottom:1px solid #e3e5ec"></div>
<div class="a" style="left:1054px;top:432px;width:133px;height:16px;background:#fafafb"></div>
<span class="t" style="left:1057px;top:435.500px;color:#444">ID</span>
<div class="a" style="left:1070px;top:433px;width:1px;height:15px;background:#dcdfe8"></div>
<span class="t" style="left:1073px;top:435.500px;color:#444">时间</span>
<div class="a" style="left:1092px;top:433px;width:1px;height:15px;background:#dcdfe8"></div>
<span class="t" style="left:1095.500px;top:435.500px;color:#444">对象(差异)</span>
<div class="a" style="left:1135px;top:433px;width:1px;height:15px;background:#dcdfe8"></div>
<span class="t" style="left:1139px;top:435.500px;color:#444">堆大小(差异)</span>
<div class="a" style="left:1186px;top:433px;width:1px;height:15px;background:#dcdfe8"></div>

<!-- ================= AUTOS PANEL ================= -->
<div class="ttl" style="left:22px;top:544px;width:613px;height:16px"><span class="t w" style="left:3px;top:3px">自动窗口</span>
  <div class="dd w" style="left:579px;top:7px"></div>
  <svg class="a" style="left:590px;top:3px" width="7" height="9" viewBox="0 0 7 9"><path d="M2 0.500 H5 M2.500 0.500 V4.500 M4.800 0.500 V4.500 M0.800 4.800 H6.200 M3.500 5 V8.500" stroke="#dfe4f5" stroke-width="0.900" fill="none"/></svg>
  <svg class="a" style="left:602px;top:4px" width="7" height="7" viewBox="0 0 7 7"><path d="M0.500 0.500 L6.500 6.500 M6.500 0.500 L0.500 6.500" stroke="#dfe4f5" stroke-width="0.900"/></svg>
</div>
<div class="tb" style="left:22px;top:560px;width:613px;height:16px">
  <div class="a" style="left:0;top:0.500px;width:141px;height:14px;background:#fff;border:1px solid #c3cbe6"></div>
  <span class="t" style="left:3px;top:3px;color:#666">搜索(Ctrl+E)</span>
  <svg class="a" style="left:131px;top:3px" width="9" height="9" viewBox="0 0 9 9"><circle cx="5.300" cy="3.500" r="2.500" fill="none" stroke="#333" stroke-width="1.100"/><path d="M3.400 5.400 L0.800 8.200" stroke="#333" stroke-width="1.300"/></svg>
  <div class="a" style="left:141px;top:0.500px;width:8px;height:14px;background:#f4f6fc;border:1px solid #c3cbe6;border-left:0"></div>
  <div class="dd" style="left:143px;top:6px"></div>
  <svg class="a" style="left:156px;top:4px" width="9" height="7" viewBox="0 0 9 7"><path d="M8.500 3.500 H1 M3.500 1 L1 3.500 L3.500 6" fill="none" stroke="#aeb7d4" stroke-width="0.900"/></svg>
  <svg class="a" style="left:170px;top:4px" width="9" height="7" viewBox="0 0 9 7"><path d="M0.500 3.500 H8 M5.500 1 L8 3.500 L5.500 6" fill="none" stroke="#aeb7d4" stroke-width="0.900"/></svg>
  <span class="t" style="left:184px;top:3px;color:#8a92ad">搜索深度:</span>
  <div class="combo dis" style="left:222px;top:1px;width:27px;height:14px"></div>
</div>
<div class="white" style="left:22px;top:576px;width:613px;height:82px"></div>
<div class="a" style="left:22px;top:591px;width:600px;height:1px;background:#eef0f5"></div>
<span class="t" style="left:32px;top:579px;color:#a0a4b0">名称</span>
<span class="t" style="left:230px;top:579px;color:#a0a4b0">值</span>
<span class="t" style="left:527px;top:579px;color:#a0a4b0">类型</span>
<div class="a" style="left:622px;top:576px;width:13px;height:82px;background:#f3f4f8"></div>
<div class="a" style="left:626px;top:581px;width:0;height:0;border:2.500px solid transparent;border-bottom:3px solid #c5c8d2;border-top:0"></div>
<div class="a" style="left:626px;top:650px;width:0;height:0;border:2.500px solid transparent;border-top:3px solid #c5c8d2;border-bottom:0"></div>
<div class="a" style="left:22px;top:658px;width:40px;height:14px;background:#fff"></div>
<span class="t" style="left:26px;top:660px;color:#1e1e1e">自动窗口</span>
<div class="a" style="left:62px;top:658px;width:37.5px;height:13px;background:#4a5a98"></div>
<span class="t w" style="left:66px;top:660px">局部变量</span>
<div class="a" style="left:101.5px;top:658px;width:30.5px;height:13px;background:#4a5a98"></div>
<span class="t w" style="left:105px;top:660px">监视 1</span>

<!-- ================= ERROR LIST PANEL ================= -->
<div class="ttl" style="left:640px;top:544px;width:618px;height:17px"><span class="t w" style="left:3px;top:3px">错误列表</span>
  <div class="dd w" style="left:584px;top:7px"></div>
  <svg class="a" style="left:595px;top:3px" width="7" height="9" viewBox="0 0 7 9"><path d="M2 0.500 H5 M2.500 0.500 V4.500 M4.800 0.500 V4.500 M0.800 4.800 H6.200 M3.500 5 V8.500" stroke="#dfe4f5" stroke-width="0.900" fill="none"/></svg>
  <svg class="a" style="left:607px;top:4px" width="7" height="7" viewBox="0 0 7 7"><path d="M0.500 0.500 L6.500 6.500 M6.500 0.500 L0.500 6.500" stroke="#dfe4f5" stroke-width="0.900"/></svg>
</div>
<div class="tb" style="left:640px;top:561px;width:618px;height:16px">
  <div class="combo" style="left:4px;top:1px;width:103px;height:14px"><span class="t">整个解决方案</span></div>
  <div class="a" style="left:112px;top:1px;width:46px;height:14px;background:#fde9c8;border:1px solid #e5c365"></div>
  <svg class="a" style="left:116px;top:4px" width="8" height="8" viewBox="0 0 8 8"><circle cx="4" cy="4" r="3.800" fill="#d3262c"/><path d="M2.400 2.400 L5.600 5.600 M5.600 2.400 L2.400 5.600" stroke="#fff" stroke-width="1.100"/></svg>
  <span class="t" style="left:128px;top:3px">错误 0</span>
  <svg class="a" style="left:164px;top:3.500px" width="10" height="9" viewBox="0 0 10 9"><path d="M5 0.500 L9.600 8.500 H0.400 Z" fill="#f3c233" stroke="#6a5310" stroke-width="0.700"/><path d="M5 3.200 V5.800 M5 6.600 V7.500" stroke="#222" stroke-width="1"/></svg>
  <span class="t" style="left:177px;top:3px">展示 1 个警告中的 0 个</span>
  <div class="sep" style="left:267px;top:2px"></div>
  <svg class="a" style="left:274px;top:4px" width="8" height="8" viewBox="0 0 8 8"><circle cx="4" cy="4" r="3.800" fill="#1f6fd0"/><path d="M4 3.400 V6.200 M4 1.800 V2.700" stroke="#fff" stroke-width="1.100"/></svg>
  <span class="t" style="left:287px;top:3px">展示 10 个消息中的 0 个</span>
  <div class="sep" style="left:384px;top:2px"></div>
  <div class="a" style="left:386px;top:1px;width:15px;height:14px;background:#fde9c8;border:1px solid #e5c365"></div>
  <svg class="a" style="left:389px;top:3.500px" width="10" height="10" viewBox="0 0 10 10"><path d="M2.600 2.600 H8.400 L6.200 5.400 V9 L4.800 8 V5.400 Z" fill="#f5e9c8" stroke="#5a4a22" stroke-width="0.800"/><circle cx="2.300" cy="2.300" r="2.200" fill="#d3262c"/><path d="M1.400 1.400 L3.200 3.200 M3.200 1.400 L1.400 3.200" stroke="#fff" stroke-width="0.700"/></svg>
  <div class="combo" style="left:408px;top:1px;width:101px;height:14px"><span class="t" style="font-size:8.500px">生成 + IntelliSense</span></div>
  <div class="a" style="left:513px;top:0.500px;width:98px;height:14px;background:#fff;border:1px solid #c3cbe6"></div>
  <span class="t" style="left:517px;top:3px;color:#8c8c8c">搜索错误列表</span>
  <svg class="a" style="left:599px;top:3px" width="9" height="9" viewBox="0 0 9 9"><circle cx="5.300" cy="3.500" r="2.500" fill="none" stroke="#333" stroke-width="1.100"/><path d="M3.400 5.400 L0.800 8.200" stroke="#333" stroke-width="1.300"/></svg>
  <div class="dd" style="left:611.500px;top:6px"></div>
</div>
<div class="white" style="left:640px;top:576px;width:618px;height:82px"></div>
<div class="a" style="left:640px;top:577px;width:618px;height:15.5px;background:#f7f7f9;border-bottom:1px solid #e6e8ee"></div>
<div class="a" style="left:659.5px;top:578px;width:1px;height:13px;background:#e0e2ea"></div><div class="a" style="left:676px;top:578px;width:1px;height:13px;background:#e0e2ea"></div>
<div class="a" style="left:668px;top:580px;width:0;height:0;border-left:4px solid transparent;border-top:4px solid #777"></div>
<span class="t" style="left:678px;top:580px;color:#333">代码</span>
<div class="a" style="left:706px;top:577px;width:1px;height:14px;background:#e0e2ea"></div>
<span class="t" style="left:712px;top:580px;color:#333">说明</span>
<div class="dd" style="left:733px;top:583px;border-width:3px 3px 0 3px"></div>
<div class="a" style="left:932px;top:577px;width:1px;height:14px;background:#e0e2ea"></div>
<span class="t" style="left:937px;top:580px;color:#333">项目</span>
<div class="a" style="left:1032px;top:577px;width:1px;height:14px;background:#e0e2ea"></div>
<span class="t" style="left:1037px;top:580px;color:#333">文件</span>
<div class="a" style="left:1132px;top:577px;width:1px;height:14px;background:#e0e2ea"></div>
<span class="t" style="left:1137px;top:580px;color:#333">行</span>
<div class="a" style="left:1155px;top:577px;width:1px;height:14px;background:#e0e2ea"></div>
<span class="t" style="left:1160px;top:580px;color:#333">禁止显示状态</span>
<div class="a" style="left:1241px;top:577px;width:1px;height:14px;background:#e0e2ea"></div>
<div class="a" style="left:642px;top:658px;width:60.5px;height:13.5px;background:#4a5a98"></div><span class="t w" style="left:642px;width:60.5px;text-align:center;top:660px">辅助功能检查器</span>
<div class="a" style="left:705px;top:658px;width:63px;height:13.5px;background:#4a5a98"></div><span class="t w" style="left:705px;width:63px;text-align:center;top:660px">XAML 绑定失败</span>
<div class="a" style="left:770.5px;top:658px;width:36.5px;height:13.5px;background:#4a5a98"></div><span class="t w" style="left:770.5px;width:36.5px;text-align:center;top:660px">调用堆栈</span>
<div class="a" style="left:809.5px;top:658px;width:22.5px;height:13.5px;background:#4a5a98"></div><span class="t w" style="left:809.5px;width:22.5px;text-align:center;top:660px">断点</span>
<div class="a" style="left:834.5px;top:658px;width:37.5px;height:13.5px;background:#4a5a98"></div><span class="t w" style="left:834.5px;width:37.5px;text-align:center;top:660px">异常设置</span>
<div class="a" style="left:874.5px;top:658px;width:37.5px;height:13.5px;background:#4a5a98"></div><span class="t w" style="left:874.5px;width:37.5px;text-align:center;top:660px">命令窗口</span>
<div class="a" style="left:915px;top:658px;width:37px;height:13.5px;background:#4a5a98"></div><span class="t w" style="left:915px;width:37px;text-align:center;top:660px">即时窗口</span>
<div class="a" style="left:954.5px;top:658px;width:21.5px;height:13.5px;background:#4a5a98"></div><span class="t w" style="left:954.5px;width:21.5px;text-align:center;top:660px">输出</span>
<div class="a" style="left:978px;top:658px;width:39px;height:14px;background:#fff"></div>
<span class="t" style="left:978px;width:39px;text-align:center;top:660px;color:#1e1e1e">错误列表</span>

<!-- ================= STATUS BAR ================= -->
<div class="a" style="left:0;top:676px;width:1280px;height:17px;background:#a5493c">
  <svg class="a" style="left:2px;top:2.500px" width="12" height="12" viewBox="0 0 12 12"><path d="M0.600 0.600 H11.400 V8.400 H7.500 L6 10.400 L4.500 8.400 H0.600 Z" fill="none" stroke="#f3dcd8" stroke-width="1"/></svg>
  <span class="t w" style="left:18px;top:4px">就绪</span>
  <svg class="a" style="left:1048px;top:4px" width="9" height="9" viewBox="0 0 9 9"><path d="M2.500 8.500 V0.800 M0.800 2.500 L2.500 0.800 L4.200 2.500 M6.500 0.500 V8.200 M4.800 6.500 L6.500 8.200 L8.200 6.500" fill="none" stroke="#fff" stroke-width="0.900"/></svg>
  <span class="t w" style="left:1062px;top:4px;font-size:8.500px">0 / 0</span>
  <div class="a" style="left:1084px;top:7px;width:0;height:0;border:2.500px solid transparent;border-bottom:3px solid #fff;border-top:0"></div>
  <svg class="a" style="left:1105px;top:4px" width="9" height="9" viewBox="0 0 9 9"><path d="M6.500 0.800 L8.200 2.500 L3 7.800 L0.800 8.300 L1.300 6.100 Z" fill="#f3dcd8" stroke="#fff" stroke-width="0.600"/></svg>
  <span class="t w" style="left:1119px;top:4px;font-size:8.500px">1</span>
  <svg class="a" style="left:1138px;top:3px" width="10" height="11" viewBox="0 0 10 11"><circle cx="2.500" cy="2" r="1.400" fill="none" stroke="#fff" stroke-width="0.900"/><circle cx="2.500" cy="9" r="1.400" fill="none" stroke="#fff" stroke-width="0.900"/><circle cx="7.500" cy="3" r="1.400" fill="none" stroke="#fff" stroke-width="0.900"/><path d="M2.500 3.400 V7.600 M7.500 4.400 C7.500 6 2.500 5.600 2.500 7.600" fill="none" stroke="#fff" stroke-width="0.900"/></svg>
  <span class="t w" style="left:1152px;top:4px;font-size:8.500px">main</span>
  <div class="a" style="left:1176px;top:7px;width:0;height:0;border:2.500px solid transparent;border-bottom:3px solid #fff;border-top:0"></div>
  <svg class="a" style="left:1199px;top:3px" width="12" height="11" viewBox="0 0 12 11"><path d="M1 0.800 H10 V6 M1 0.800 V9.500 H6 M1 3 H10 M4 0.800 V9.500 M7 0.800 V5" fill="none" stroke="#fff" stroke-width="0.900"/><circle cx="9" cy="8.500" r="2" fill="#fff"/></svg>
  <span class="t w" style="left:1214px;top:4px;font-size:8.500px">VPet</span>
  <div class="a" style="left:1236px;top:7px;width:0;height:0;border:2.500px solid transparent;border-bottom:3px solid #fff;border-top:0"></div>
  <svg class="a" style="left:1255px;top:3px" width="14" height="12" viewBox="0 0 14 12"><path d="M2 8.500 C3.200 7.500 3 5.500 3.200 4 C3.500 2 4.800 1 6 1 C7.200 1 8.500 2 8.800 4 C9 5.500 8.800 7.500 10 8.500 Z M5 9.800 H7" fill="none" stroke="#f3dcd8" stroke-width="0.900"/><circle cx="10" cy="8" r="2.800" fill="#fff"/><path d="M10 6.300 V8.300 M10 9 V9.700" stroke="#a5493c" stroke-width="0.800"/></svg>
</div>

<!-- ================= PET (in task panel) ================= -->
<svg class="a" style="left:150px;top:100px" width="80" height="63" viewBox="150 100 80 63">
  <path d="M178.500 112.500 C178.500 116 179.500 118.500 181.200 119.800 M182.500 112.500 C182.500 115.500 183 116.800 185.500 117 H192 C195 117 196.500 118 198 120" fill="none" stroke="#7d8290" stroke-width="1.200"/>
  <rect x="175.500" y="104.500" width="23.500" height="8" fill="#c6cce9" stroke="#555f84" stroke-width="1"/>
  <rect x="180" y="107.200" width="15" height="2" fill="#555f84"/>
  <!-- pet head -->
  <g>
  <rect x="159" y="144.500" width="58" height="17" fill="#b4b5bd"/>
  <path d="M169 161.500 C168 152 173 145 188 144.500 C200 145 203.500 150 201 156 L197 161.500 Z" fill="#fbf3f1"/>
  <path d="M170 150 C171 146 175 144.500 179 145.500 L182 150 Z" fill="#f3c6cc"/>
  <path d="M159.500 144.500 V161.500 M162.500 144.500 V152 L167 160 H171 M216.500 144.500 V161.500 M211.500 150 V161.500 M207.500 146 L203 159 V161.500 M166 144.500 L169.500 153" stroke="#4d4f5c" stroke-width="0.900" fill="none"/>
  <path d="M180 144.500 L184.500 153.500 L187 155 L189.500 153 L192 144.500 Z" fill="#b4b5bd"/>
  <circle cx="185" cy="153.500" r="0.800" fill="#3c3d48"/><circle cx="188.500" cy="153.200" r="0.800" fill="#3c3d48"/>
  <ellipse cx="175.600" cy="153" rx="2.900" ry="3.700" fill="#f6d679" stroke="#5a3a20" stroke-width="0.800"/>
  <path d="M172.300 151.500 C173 148.200 178 148.200 179 151.500" stroke="#3a2418" stroke-width="1.300" fill="none"/>
  <ellipse cx="194.400" cy="150.400" rx="2.900" ry="3.700" fill="#f6d679" stroke="#3a3a30" stroke-width="0.800"/>
  <path d="M190.500 149.500 C191.500 145.200 197.500 145.200 198.500 149.500" stroke="#1e2a2e" stroke-width="1.600" fill="none"/>
  <path d="M196 156.500 L199.500 158.500 L203 157.500" stroke="#4d4f5c" stroke-width="1" fill="none"/>
  <path d="M182 161.500 Q185.500 158.800 189.500 161.500 Z" fill="#c2455a" stroke="#5a2430" stroke-width="0.700"/>
  <rect x="208" y="146.600" width="8.500" height="3.800" fill="#a55a36"/>
  <rect x="209" y="147.200" width="6" height="1.200" fill="#d98a5a"/>
  </g>
</svg>
<!-- said box -->
<div class="a" style="left:106px;top:121px;width:162px;height:23.500px;background:#c3e6fb;border:1px solid #7ccdf6;border-radius:2.500px"></div>
<div class="a" style="left:109.500px;top:124.500px;width:123px;height:13.500px;background:#fff"></div>
<span class="t" style="left:112px;top:124.500px;font-size:10.900px;line-height:13px;height:13px;color:#d2d2d2">Said with desktop pet</span>
<div class="a" style="left:109.500px;top:139px;width:155px;height:2px;background:#3aa6ea;border-radius:1px"></div>
<div class="a" style="left:235px;top:124.500px;width:30px;height:13.500px;background:#a6d6f7"></div>
<span class="t" style="left:235px;width:30px;text-align:center;top:124.500px;font-size:10.600px;line-height:13px;height:13px;color:#3a4654">Send</span>

<!-- ================= VPET PANEL POPUP ================= -->
<div class="a" style="left:104px;top:161px;width:166.500px;height:110px;background:#fff;border:1px solid #bfe3f9"></div>
<span class="t" style="left:110px;top:167px;font-size:9px;color:#55b0e6">Lv 7</span>
<span class="t pl" style="left:109.500px;top:187px">Money</span>
<span class="t" style="left:143px;top:187px;font-size:8.400px;color:#3aa0e4">$ 82,453.15</span>
<span class="t pl" style="left:109.5px;top:197px">EXP</span><div class="a" style="left:143px;top:199px;width:95px;height:6px;border-radius:3px;background:#e6e6e6;overflow:hidden"><div class="a" style="left:0;top:0;width:75.4px;height:6px;background:#1e96e0;border-radius:3px 0 0 3px"></div></div><span class="t" style="left:143px;width:95px;text-align:center;top:199px;font-size:6.500px;color:#fff;line-height:6.500px;height:6px">3872.78 / 4900</span><span class="t pv" style="left:225px;width:40.500px;text-align:right;top:197px">x1.0</span>
<span class="t pl" style="left:109.5px;top:207px">Stamina</span><div class="a" style="left:143px;top:209px;width:95px;height:6px;border-radius:3px;background:#e6e6e6;overflow:hidden"><div class="a" style="left:0;top:0;width:83.2px;height:6px;background:#1e96e0;border-radius:3px 0 0 3px"></div></div><span class="t" style="left:143px;width:95px;text-align:center;top:209px;font-size:6.500px;color:#fff;line-height:6.500px;height:6px">86.95 / 100</span><span class="t pv" style="left:225px;width:40.500px;text-align:right;top:207px">0.22/t</span>
<span class="t pl" style="left:109.5px;top:217px">Mood</span><div class="a" style="left:143px;top:219px;width:95px;height:6px;border-radius:3px;background:#e6e6e6;overflow:hidden"><div class="a" style="left:0;top:0;width:94.9px;height:6px;background:#9ccc65;border-radius:3px 0 0 3px"></div></div><span class="t" style="left:143px;width:95px;text-align:center;top:219px;font-size:6.500px;color:#fff;line-height:6.500px;height:6px">99.39 / 100</span><span class="t pv" style="left:225px;width:40.500px;text-align:right;top:217px">-0.05/t</span>
<span class="t pl" style="left:109.5px;top:227px">Hunger</span><div class="a" style="left:143px;top:229px;width:95px;height:6px;border-radius:3px;background:#e6e6e6;overflow:hidden"><div class="a" style="left:0;top:0;width:77.7px;height:6px;background:#9ccc65;border-radius:3px 0 0 3px"></div></div><span class="t" style="left:143px;width:95px;text-align:center;top:229px;font-size:6.500px;color:#fff;line-height:6.500px;height:6px">81.76 / 100</span><span class="t pv" style="left:225px;width:40.500px;text-align:right;top:227px">-0.19/t</span>
<span class="t pl" style="left:109.5px;top:237px">Thirst</span><div class="a" style="left:143px;top:239px;width:95px;height:6px;border-radius:3px;background:#e6e6e6;overflow:hidden"><div class="a" style="left:0;top:0;width:94.9px;height:6px;background:#9ccc65;border-radius:3px 0 0 3px"></div></div><span class="t" style="left:143px;width:95px;text-align:center;top:239px;font-size:6.500px;color:#fff;line-height:6.500px;height:6px">99.90 / 100</span><span class="t pv" style="left:225px;width:40.500px;text-align:right;top:237px">0.51/t</span>

<div class="a" style="left:105px;top:252px;width:165px;height:1px;background:#a9daf8"></div>
<div class="a" style="left:138px;top:253px;width:32.500px;height:17.500px;background:#c9e6fb"></div>
<span class="t pm" style="left:111.500px;top:257px">Feed</span>
<span class="t pm" style="left:143.500px;top:257px;color:#3aa0e4">Panel</span>
<span class="t pm" style="left:172.500px;top:257px">Interact</span>
<span class="t pm" style="left:214px;top:257px">DIY</span>
<span class="t pm" style="left:239.500px;top:257px">System</span>

</body>
</html>
